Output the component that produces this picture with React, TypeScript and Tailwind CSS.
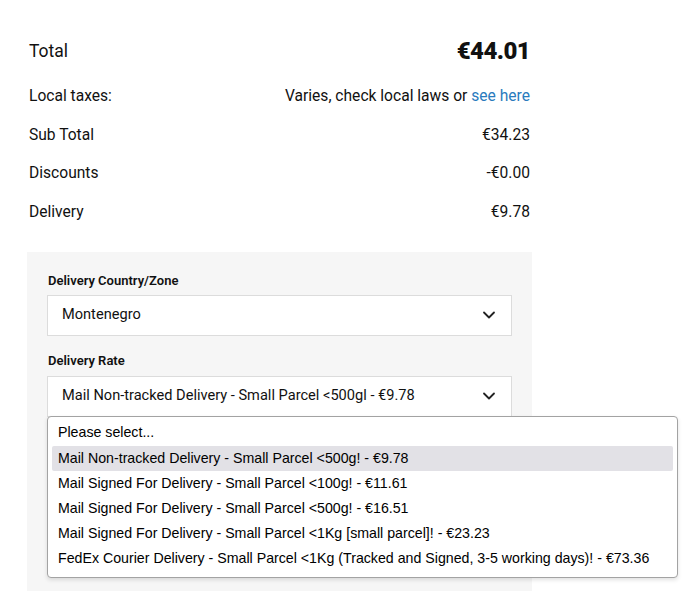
import { ChevronDown } from 'lucide-react';

const rows = [
  { label: 'Sub Total', value: '€34.23' },
  { label: 'Discounts', value: '-€0.00' },
  { label: 'Delivery', value: '€9.78' },
];

const rates = [
  'Please select...',
  'Mail Non-tracked Delivery - Small Parcel <500g! - €9.78',
  'Mail Signed For Delivery - Small Parcel <100g! - €11.61',
  'Mail Signed For Delivery - Small Parcel <500g! - €16.51',
  'Mail Signed For Delivery - Small Parcel <1Kg [small parcel]! - €23.23',
  'FedEx Courier Delivery - Small Parcel <1Kg (Tracked and Signed, 3-5 working days)! - €73.36',
];

function SelectBox({ value }: { value: string }) {
  return (
    <div className="h-[41px] bg-white border border-[#dcdcdc] flex items-center justify-between pl-[14px] pr-[12px] text-[14.6px] text-[#111]">
      <span>{value}</span>
      <ChevronDown className="w-[20px] h-[20px] text-[#222]" strokeWidth={2.2} />
    </div>
  );
}

export default function App() {
  return (
    <main className="min-h-screen bg-white font-['Roboto',sans-serif] text-[#111]">
      <div className="w-[501px] ml-[29px] pt-[31px]">
        {/* totals */}
        <div className="h-[40px] flex items-center justify-between">
          <span className="text-[17.5px]">Total</span>
          <span className="text-[24px] font-black tracking-tight">€44.01</span>
        </div>
        <div className="mt-[7px] h-[38px] flex items-center justify-between text-[15.6px]">
          <span>Local taxes:</span>
          <span>
            Varies, check local laws or{' '}
            <a href="#" className="text-[#2a7bbd]">see here</a>
          </span>
        </div>
        {rows.map((row) => (
          <div key={row.label} className="h-[38.5px] flex items-center justify-between text-[15.6px]">
            <span>{row.label}</span>
            <span>{row.value}</span>
          </div>
        ))}

        {/* delivery options */}
        <div className="mt-[20px] -mx-[2px] bg-[#f6f6f6] px-[20px] pt-[21px] pb-[174px]">
          <div className="pl-[1px] text-[13px] font-semibold leading-[16px] mb-[6px]">Delivery Country/Zone</div>
          <SelectBox value="Montenegro" />
          <div className="pl-[1px] text-[13px] font-semibold leading-[16px] mt-[17px] mb-[7px]">Delivery Rate</div>
          <div className="relative">
            <SelectBox value="Mail Non-tracked Delivery - Small Parcel <500gl - €9.78" />
            <ul className="absolute left-0 top-[40px] w-[631px] bg-white border border-[#a3a3a3] rounded-[4px] shadow-[0_2px_4px_rgba(0,0,0,0.12)] px-[4px] pt-[4px] pb-[5px] font-['Liberation_Sans',Arial,sans-serif] text-[14.2px] text-black">
              {rates.map((rate, i) => (
                <li
                  key={rate}
                  className={`h-[25.2px] flex items-center px-[6px] rounded-[2px] ${i === 1 ? 'bg-[#e2e1e6]' : ''}`}
                >
                  {rate}
                </li>
              ))}
            </ul>
          </div>
        </div>
      </div>
    </main>
  );
}
